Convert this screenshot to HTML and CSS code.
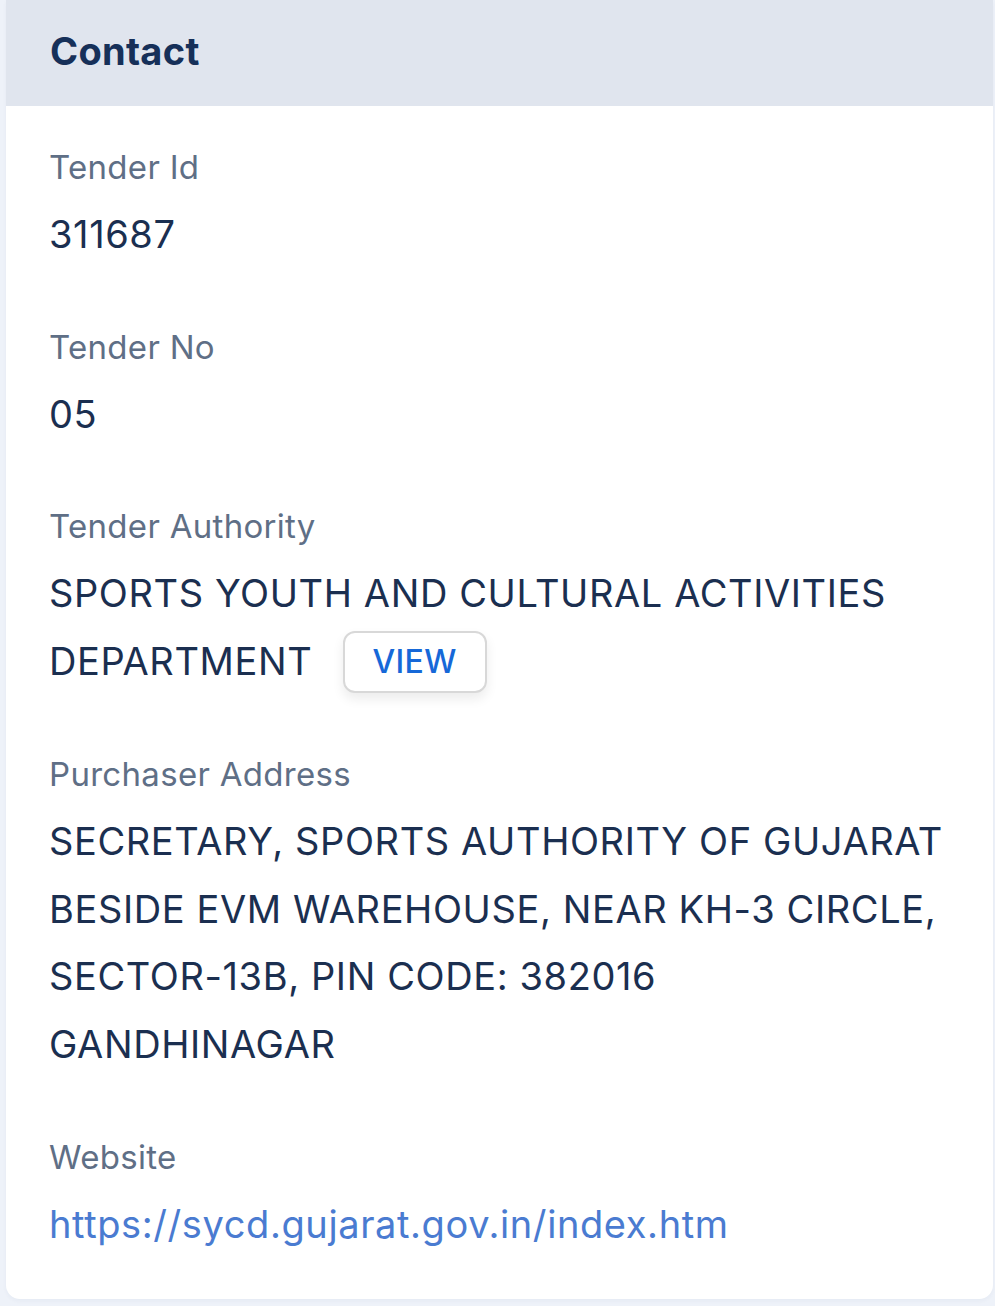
FILE: index.html
```html
<!DOCTYPE html>
<html>
<head>
<meta charset="utf-8">
<link rel="stylesheet" href="styles.css">
</head>
<body>
<div class="card">
  <div class="card-header"><h2 class="title">Contact</h2></div>
  <div class="card-body">
    <div class="field">
      <div class="label">Tender Id</div>
      <div class="value">311687</div>
    </div>
    <div class="field">
      <div class="label">Tender No</div>
      <div class="value">05</div>
    </div>
    <div class="field">
      <div class="label">Tender Authority</div>
      <div class="value">SPORTS YOUTH AND CULTURAL ACTIVITIES DEPARTMENT <button class="view-btn">VIEW</button></div>
    </div>
    <div class="field">
      <div class="label">Purchaser Address</div>
      <div class="value">SECRETARY, SPORTS AUTHORITY OF GUJARAT BESIDE EVM WAREHOUSE, NEAR KH-3 CIRCLE, SECTOR-13B, PIN CODE: 382016<br>GANDHINAGAR</div>
    </div>
    <div class="field">
      <div class="label">Website</div>
      <div class="value"><a class="link" href="#">https://sycd.gujarat.gov.in/index.htm</a></div>
    </div>
  </div>
</div>
</body>
</html>
```
FILE: styles.css
```css
* { box-sizing: border-box; }
html, body { margin: 0; padding: 0; }
body {
  background: #eef2f9;
  font-family: Inter, "Noto Sans", "Liberation Sans", sans-serif;
  width: 995px;
  height: 1306px;
  overflow: hidden;
}
.card {
  margin-left: 6px;
  width: 987px;
  background: #ffffff;
  border-radius: 0 0 14px 14px;
  overflow: hidden;
  box-shadow: 0 2px 4px rgba(30, 50, 90, 0.04);
}
.card-header {
  height: 106px;
  background: #e0e5ee;
  padding-left: 44px;
  display: flex;
  align-items: center;
}
.title {
  margin: 0;
  font-size: 38px;
  font-weight: 700;
  color: #163059;
  line-height: 1;
  letter-spacing: 0.3px;
  position: relative;
  top: -2px;
}
.card-body {
  padding: 37px 20px 41px 43px;
  display: flex;
  flex-direction: column;
  gap: 54px;
}
.label {
  font-size: 33px;
  line-height: 48px;
  color: #5f6f86;
  letter-spacing: 0.3px;
  margin-bottom: 10px;
}
.value {
  font-size: 38px;
  line-height: 67.7px;
  color: #1b2f50;
  letter-spacing: 0.6px;
}
.view-btn {
  display: inline-block;
  vertical-align: middle;
  margin-left: 19px;
  width: 144px;
  height: 62px;
  border: 2px solid #d8d8d8;
  border-radius: 12px;
  background: #ffffff;
  box-shadow: 0 6px 12px rgba(0, 0, 0, 0.08);
  font-family: Inter, "Noto Sans", sans-serif;
  font-size: 32px;
  font-weight: 500;
  letter-spacing: 0.3px;
  color: #1668d8;
  padding: 0;
  line-height: 58px;
  position: relative;
  top: -3px;
}
.link {
  color: #4a7bd1;
  text-decoration: none;
}
```
